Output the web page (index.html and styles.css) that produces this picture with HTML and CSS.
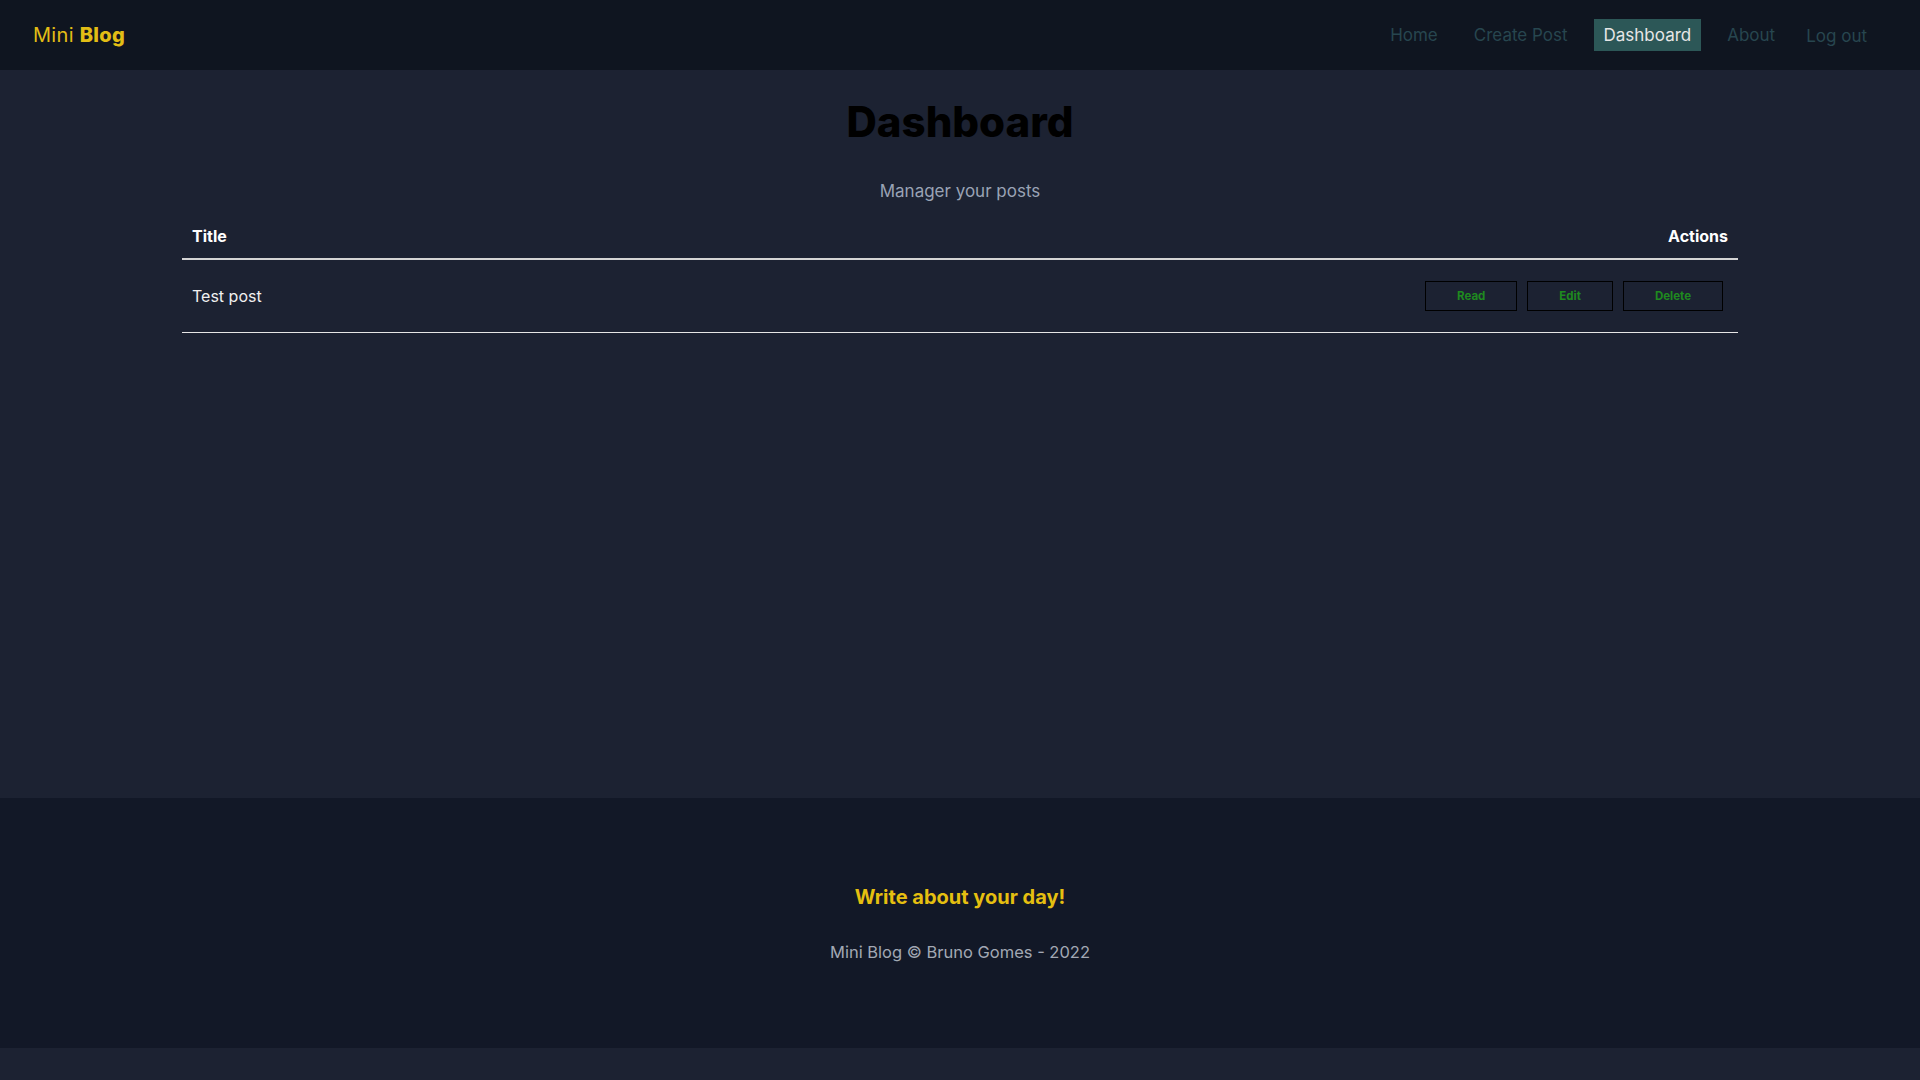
FILE: index.html
```html
<!DOCTYPE html>
<html lang="en">
<head>
<meta charset="utf-8">
<title>Mini Blog</title>
<link rel="stylesheet" href="styles.css">
</head>
<body>
<div class="app">
  <nav class="navbar">
    <a class="brand" href="#">Mini <span>Blog</span></a>
    <ul class="links">
      <li><a href="#">Home</a></li>
      <li><a href="#">Create Post</a></li>
      <li><a class="active" href="#">Dashboard</a></li>
      <li><a href="#">About</a></li>
      <li><button class="logout">Log out</button></li>
    </ul>
  </nav>
  <main class="dashboard">
    <h1>Dashboard</h1>
    <p class="subtitle">Manager your posts</p>
    <div class="table">
      <div class="thead">
        <span>Title</span>
        <span>Actions</span>
      </div>
      <div class="row">
        <p class="post-title">Test post</p>
        <div class="actions">
          <a class="btn" href="#">Read</a>
          <a class="btn" href="#">Edit</a>
          <button class="btn">Delete</button>
        </div>
      </div>
    </div>
  </main>
  <footer class="footer">
    <h3>Write about your day!</h3>
    <p>Mini Blog &copy; Bruno Gomes - 2022</p>
  </footer>
</div>
</body>
</html>
```

FILE: styles.css
```css
* {
  box-sizing: border-box;
}

html, body {
  margin: 0;
  padding: 0;
}

body {
  background: #1c2232;
  font-family: Inter, "Noto Sans", "DejaVu Sans", sans-serif;
  color: #e8e8e8;
  height: 1080px;
}

a {
  text-decoration: none;
}

.navbar {
  height: 70px;
  background: #0f1520;
  display: flex;
  align-items: center;
  justify-content: space-between;
  padding: 0 48px 0 33px;
}

.brand {
  color: #e2bd15;
  font-size: 20px;
  font-weight: 400;
  letter-spacing: 0.3px;
}

.brand span {
  font-weight: 800;
}

.links {
  list-style: none;
  display: flex;
  align-items: center;
  gap: 16px;
  margin: 0;
  padding: 0;
}

.links a {
  display: block;
  padding: 6px 10px;
  color: #27464f;
  font-size: 17px;
  line-height: 20px;
}

.links a.active {
  background: #2c5757;
  color: #e6e6e6;
}

.logout {
  background: none;
  border: none;
  font-family: inherit;
  font-size: 17px;
  color: #27464f;
  padding: 7px 5px 5px;
  cursor: pointer;
}

.dashboard {
  min-height: 728px;
  display: flex;
  flex-direction: column;
  align-items: center;
  padding-top: 27px;
}

.dashboard h1 {
  margin: 0;
  font-size: 42px;
  line-height: 50px;
  font-weight: 800;
  color: #000;
}

.subtitle {
  margin: 34px 0 0;
  font-size: 17px;
  line-height: 20px;
  color: #9aa3b5;
}

.table {
  width: 1556px;
  margin-top: 9px;
}

.thead {
  display: flex;
  justify-content: space-between;
  align-items: center;
  height: 50px;
  padding: 4px 10px 0;
  border-bottom: 2px solid #d4d4d4;
  font-weight: 700;
  font-size: 16px;
  color: #fff;
}

.row {
  display: flex;
  justify-content: space-between;
  align-items: center;
  height: 73px;
  padding: 0 15px 0 10px;
  border-bottom: 1px solid #e6e6e6;
}

.post-title {
  margin: 0;
  font-size: 16px;
  color: #f0f0f0;
}

.actions {
  display: flex;
  gap: 10px;
}

.btn {
  display: block;
  height: 30px;
  padding: 0 31px;
  border: 1px solid #000;
  background: transparent;
  color: #1f8a1f;
  font-family: inherit;
  font-size: 11.5px;
  font-weight: 700;
  line-height: 28px;
  cursor: pointer;
}

.footer {
  height: 250px;
  background: #121827;
  display: flex;
  flex-direction: column;
  align-items: center;
  padding-top: 86px;
}

.footer h3 {
  margin: 0;
  font-size: 20px;
  line-height: 26px;
  font-weight: 700;
  color: #e5bf10;
}

.footer p {
  margin: 32px 0 0;
  font-size: 16.5px;
  line-height: 20px;
  color: #a2a8b4;
}
```
